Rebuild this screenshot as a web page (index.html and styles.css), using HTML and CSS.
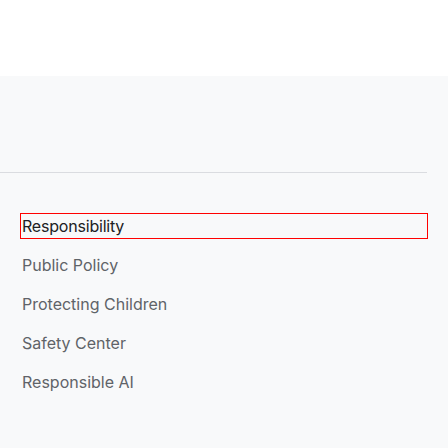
FILE: index.html
```html
<!DOCTYPE html>
<html>
<head>
<meta charset="utf-8">
<link rel="stylesheet" href="styles.css">
</head>
<body>
<div class="top"></div>
<div class="footer">
  <div class="rule"></div>
  <div class="group">
    <h2 class="heading">Responsibility</h2>
    <ul class="links">
      <li><a href="#">Public Policy</a></li>
      <li><a href="#">Protecting Children</a></li>
      <li><a href="#">Safety Center</a></li>
      <li><a href="#">Responsible AI</a></li>
    </ul>
  </div>
</div>
</body>
</html>
```
FILE: styles.css
```css
html, body {
  margin: 0;
  padding: 0;
  height: 100%;
}
body {
  background: #f8f9fa;
  font-family: Inter, "Noto Sans", sans-serif;
  overflow: hidden;
}
.top {
  height: 76px;
  background: #ffffff;
}
.footer {
  padding-top: 96px;
  padding-right: 21px;
}
.rule {
  height: 1px;
  background: #dadce0;
}
.group {
  padding: 41px 0 0 21px;
}
.heading {
  margin: 0;
  font-size: 16px;
  font-weight: 400;
  line-height: 22px;
  color: #202124;
  outline: 1px solid #ff0000;
  border: 1px solid transparent;
  height: 22px;
  letter-spacing: -0.2px;
}
.links {
  list-style: none;
  margin: 0;
  padding: 16px 0 0 1px;
}
.links li {
  height: 39px;
  line-height: 22px;
}
.links a {
  font-size: 16px;
  font-weight: 400;
  color: #5f6368;
  text-decoration: none;
}
```
